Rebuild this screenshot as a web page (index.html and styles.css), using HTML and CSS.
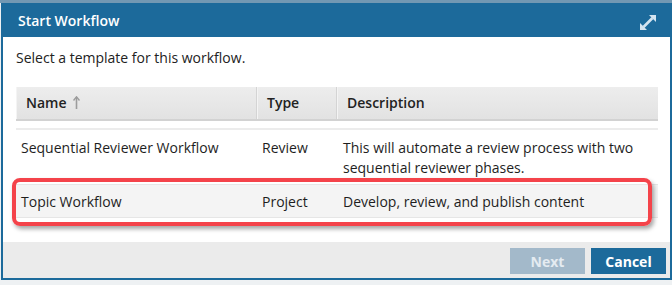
FILE: index.html
```html
<!DOCTYPE html>
<html>
<head>
<meta charset="utf-8">
<link rel="stylesheet" href="styles.css">
</head>
<body>
<div class="dialog">
  <div class="dlg-head">
    <span class="dlg-title">Start Workflow</span>
    <svg class="expand" width="16" height="15" viewBox="0 0 16 15">
      <path d="M9 0 H16 V7 Z" fill="#d4e4f0"/>
      <path d="M0 8 V15 H7 Z" fill="#d4e4f0"/>
      <path d="M12.5 3 L3.5 12" stroke="#d4e4f0" stroke-width="2.6"/>
    </svg>
  </div>
  <div class="dlg-body">
    <p class="intro">Select a template for this workflow.</p>
    <div class="grid">
      <div class="g-head">
        <div class="hc">Name <svg class="sort" width="7" height="13" viewBox="0 0 7 13"><path d="M3.5 1 V13" stroke="#9c9c9c" stroke-width="1.6"/><path d="M0.5 4.5 L3.5 0.8 L6.5 4.5" fill="none" stroke="#9c9c9c" stroke-width="1.4"/></svg></div>
        <div class="hc">Type</div>
        <div class="hc last">Description</div>
      </div>
      <div class="g-rows">
        <div class="row first">
          <div class="c">Sequential Reviewer Workflow</div>
          <div class="c">Review</div>
          <div class="c">This will automate a review process with two sequential reviewer phases.</div>
        </div>
        <div class="row sel">
          <div class="c">Topic Workflow</div>
          <div class="c">Project</div>
          <div class="c">Develop, review, and publish content</div>
        </div>
      </div>
    </div>
    <div class="callout"></div>
  </div>
  <div class="dlg-foot">
    <button class="btn disabled">Next</button>
    <button class="btn primary">Cancel</button>
  </div>
</div>
</body>
</html>
```
FILE: styles.css
```css
html, body {
  margin: 0;
  padding: 0;
}
body {
  background: linear-gradient(#7298b3 0, #7298b3 3px, #eef1f3 3px);
  font-family: "Open Sans", "DejaVu Sans", sans-serif;
  width: 672px;
  height: 285px;
  overflow: hidden;
}
.dialog {
  margin: 3px 0 0 1px;
  width: 671px;
  box-sizing: border-box;
  border: 2px solid #1c6a9b;
  border-top: none;
  background: #fff;
}
.dlg-head {
  height: 34px;
  background: #1c6a9b;
  display: flex;
  align-items: center;
  justify-content: space-between;
  padding: 0 14px 0 15px;
}
.dlg-title {
  color: #fff;
  font-weight: 600;
  font-size: 14px;
}
.expand {
  display: block;
  margin-top: 4px;
}
.dlg-body {
  position: relative;
  padding: 11px 12px 24px 13px;
}
.intro {
  margin: 0;
  font-size: 14px;
  line-height: 20px;
  color: #222;
}
.grid {
  margin-top: 19px;
  font-size: 14px;
  color: #1e1e1e;
}
.g-head {
  display: grid;
  grid-template-columns: 241px 80px 1fr;
  background: linear-gradient(#ededed, #e2e2e2);
  border-bottom: 2px solid #d2d2d2;
}
.hc {
  height: 32px;
  line-height: 32px;
  padding: 0 10px;
  font-weight: 600;
  color: #222;
  border-right: 1px solid #d4d4d4;
  box-shadow: inset 1px 0 0 #f4f4f4;
}
.hc.last {
  border-right: none;
}
.sort {
  display: inline-block;
  vertical-align: -1px;
  margin-left: 3px;
}
.g-rows {
  margin-top: 7px;
  border-top: 2px solid #ececec;
}
.row {
  display: grid;
  grid-template-columns: 241px 80px 1fr;
  border-bottom: 1px solid #e6e6e6;
}
.row .c {
  padding: 7px 5px 7px 5px;
  line-height: 20px;
}
.row.first .c {
  padding-top: 8px;
  padding-bottom: 6px;
}
.row .c:nth-child(3) {
  padding-left: 6px;
  padding-right: 16px;
}
.row.sel {
  background: #f4f4f4;
}
.row.sel .c {
  padding-top: 7px;
  padding-bottom: 5px;
}
.callout {
  position: absolute;
  left: 9px;
  top: 141px;
  width: 640px;
  height: 48px;
  box-sizing: border-box;
  border: 4px solid #f4434a;
  border-radius: 8px;
  box-shadow: 2px 3px 4px rgba(0, 0, 0, 0.35);
}
.dlg-foot {
  background: #ebebeb;
  display: flex;
  justify-content: flex-end;
  gap: 6px;
  padding: 6px 4px 4px 0;
}
.btn {
  width: 75px;
  height: 26px;
  border: none;
  font-family: "Open Sans", "DejaVu Sans", sans-serif;
  font-size: 14px;
  font-weight: 700;
  padding: 0;
}
.btn.disabled {
  background: #a3b9ca;
  color: #e4ebf1;
}
.btn.primary {
  background: #1c6a9b;
  color: #fff;
}
```
